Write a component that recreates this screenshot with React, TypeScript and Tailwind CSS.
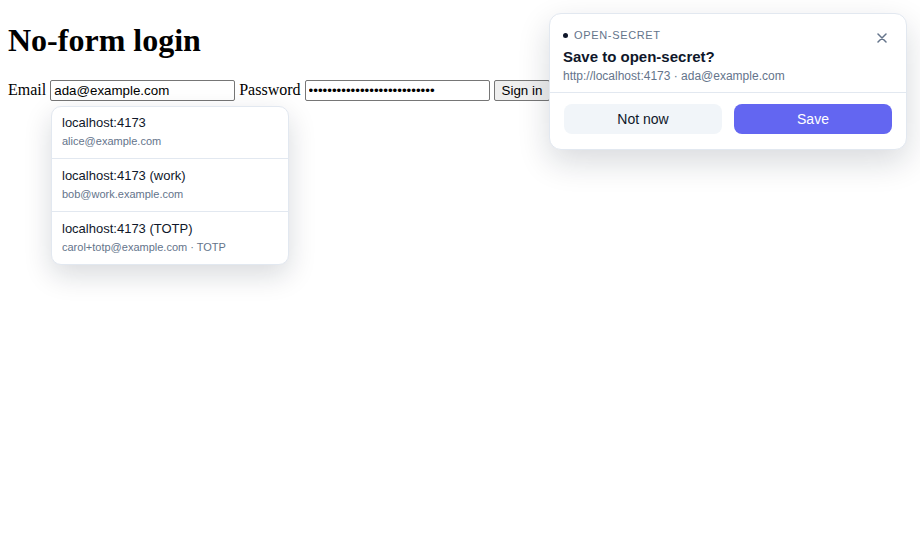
import React from "react";

const sans = { fontFamily: '"Liberation Sans", Arial, sans-serif' };

export default function App() {
  return (
    <div className="relative w-[920px] h-[560px] bg-white text-black overflow-hidden">
      <div className="px-2 font-['Liberation_Serif',serif]">
        <h1 className="text-[32px] font-bold leading-normal mt-[15.5px] mb-[14.5px]">No-form login</h1>
        <div className="text-base leading-normal">
          Email{" "}
          <input
            readOnly
            value="ada@example.com"
            className="inline-block align-baseline w-[185px] h-[21px] border border-[#767676] rounded-[2px] px-[3px] py-[2px] leading-[15px] text-[13.333px] text-black bg-white font-['Liberation_Sans',Arial,sans-serif] outline-none"
          />{" "}
          Password{" "}
          <input
            readOnly
            type="password"
            value="abcdefghijklmnopqrstuvwxyz0"
            className="inline-block align-baseline w-[185px] h-[21px] border border-[#767676] rounded-[2px] px-[3px] py-[2px] leading-[15px] text-[13.333px] text-black bg-white font-['Liberation_Sans',Arial,sans-serif] outline-none"
          />{" "}
          <button className="inline-block align-baseline h-[21px] border border-[#767676] rounded-[2px] px-[7px] leading-[15px] bg-[#efefef] text-[13.333px] text-black font-['Liberation_Sans',Arial,sans-serif]">
            Sign in
          </button>
        </div>
      </div>

      {/* Autofill dropdown */}
      <div
        style={sans}
        className="absolute left-[51px] top-[106px] w-[238px] bg-white border border-[#e2e8f0] rounded-[10px] shadow-[0_10px_28px_rgba(15,23,42,0.16)] overflow-hidden"
      >
        {[
          ["localhost:4173", "alice@example.com"],
          ["localhost:4173 (work)", "bob@work.example.com"],
          ["localhost:4173 (TOTP)", "carol+totp@example.com · TOTP"],
        ].map(([t, s], i) => (
          <div key={i} className={"px-[10px] pb-[9px] " + (i > 0 ? "pt-[8px] border-t border-[#e2e8f0]" : "pt-[7px]")}>
            <div className="text-[13px] leading-[18px] text-[#0f172a]">{t}</div>
            <div className="text-[11px] leading-[16px] text-[#64748b] mt-[1px]">{s}</div>
          </div>
        ))}
      </div>

      {/* Save popup */}
      <div
        style={sans}
        className="absolute left-[549px] top-[13px] w-[358px] bg-white border border-[#e2e8f0] rounded-[12px] shadow-[0_12px_32px_rgba(15,23,42,0.16)]"
      >
        <div className="relative px-[13px] pt-[13px] pb-[7px]">
          <div className="flex items-center gap-[6px] text-[11px] leading-[16px] tracking-[0.06em] text-[#64748b]">
            <span className="w-[5px] h-[5px] rounded-full bg-[#0f172a]" />
            OPEN-SECRET
          </div>
          <div className="mt-[4px] text-[15px] leading-[20px] font-bold text-[#0f172a]">Save to open-secret?</div>
          <div className="text-[12px] leading-[18px] text-[#64748b]">http://localhost:4173 · ada@example.com</div>
          <button className="absolute right-[19px] top-[19px] text-[#64748b]">
            <svg width="10" height="10" viewBox="0 0 10 10" fill="none" stroke="currentColor" strokeWidth="1.5" strokeLinecap="round">
              <path d="M1 1L9 9M9 1L1 9" />
            </svg>
          </button>
        </div>
        <div className="border-t border-[#e2e8f0] flex gap-3 px-[14px] pt-[11px] pb-[15px]">
          <button className="flex-1 h-[30px] rounded-[8px] bg-[#f1f5f9] text-[14px] text-[#0f172a]">Not now</button>
          <button className="flex-1 h-[30px] rounded-[8px] bg-[#6366f1] text-[14px] text-white">Save</button>
        </div>
      </div>
    </div>
  );
}
